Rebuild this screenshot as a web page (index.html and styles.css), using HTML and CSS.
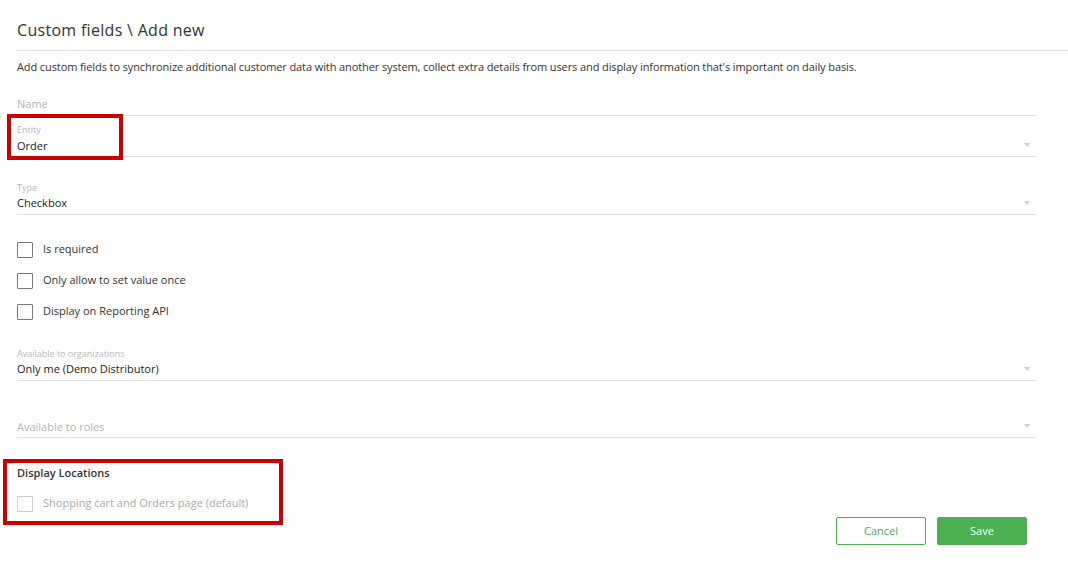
FILE: index.html
```
<!DOCTYPE html>
<html>
<head>
<meta charset="utf-8">
<link rel="stylesheet" href="styles.css">
</head>
<body>
<div class="page">
  <h1 class="title">Custom fields \ Add new</h1>
  <p class="desc">Add custom fields to synchronize additional customer data with another system, collect extra details from users and display information that's important on daily basis.</p>
  <form class="form">
    <div class="field field-name">
      <div class="placeholder">Name</div>
    </div>
    <div class="field field-entity select">
      <div class="label">Entity</div>
      <div class="value">Order</div>
      <span class="arrow"></span>
    </div>
    <div class="field field-type select">
      <div class="label">Type</div>
      <div class="value">Checkbox</div>
      <span class="arrow"></span>
    </div>
    <div class="checks">
      <label class="check"><span class="box"></span><span class="check-text">Is required</span></label>
      <label class="check"><span class="box"></span><span class="check-text">Only allow to set value once</span></label>
      <label class="check"><span class="box"></span><span class="check-text">Display on Reporting API</span></label>
    </div>
    <div class="field field-org select">
      <div class="label">Available to organizations</div>
      <div class="value">Only me (Demo Distributor)</div>
      <span class="arrow"></span>
    </div>
    <div class="field field-roles select">
      <div class="placeholder">Available to roles</div>
      <span class="arrow"></span>
    </div>
    <div class="locations">
      <div class="section-title">Display Locations</div>
      <label class="check disabled"><span class="box"></span><span class="check-text">Shopping cart and Orders page (default)</span></label>
    </div>
    <div class="actions">
      <button type="button" class="btn btn-cancel">Cancel</button>
      <button type="button" class="btn btn-save">Save</button>
    </div>
  </form>
  <div class="mark mark-entity"></div>
  <div class="mark mark-locations"></div>
</div>
</body>
</html>
```
FILE: styles.css
```
html, body {
  margin: 0;
  padding: 0;
  background: #fff;
}
body {
  font-family: "Open Sans", "Noto Sans", sans-serif;
  color: #333;
  font-size: 11px;
}
.page {
  position: relative;
  padding: 20px 0 0 17px;
  width: 1051px;
  height: 543px;
}
.title {
  margin: 0;
  padding-bottom: 10px;
  font-size: 16px;
  line-height: 20px;
  font-weight: normal;
  letter-spacing: 0.3px;
  color: #333;
  border-bottom: 1px solid #e2e2e2;
}
.desc {
  margin: 8px 0 0;
  line-height: 16px;
  font-size: 11px;
  letter-spacing: -0.1px;
  color: #333;
}
.form {
  width: 1020px;
}
.field {
  position: relative;
  border-bottom: 1px solid #e2e2e2;
}
.placeholder {
  font-size: 11px;
  line-height: 16px;
  color: #b4b4b4;
}
.label {
  font-size: 9px;
  line-height: 12px;
  color: #b8b8b8;
}
.value {
  margin-top: 2px;
  font-size: 11px;
  line-height: 16px;
  color: #222;
}
.arrow {
  position: absolute;
  right: 7px;
  bottom: 9px;
  width: 0;
  height: 0;
  border-left: 3.5px solid transparent;
  border-right: 3.5px solid transparent;
  border-top: 4px solid #cfcfcf;
}
.field-name {
  margin-top: 21px;
  padding-bottom: 3px;
}
.field-entity {
  margin-top: 8px;
  padding-bottom: 2px;
}
.field-type {
  margin-top: 25px;
  padding-bottom: 3px;
}
.field-type .value {
  margin-top: 1px;
}
.checks {
  margin-top: 27px;
  display: flex;
  flex-direction: column;
  gap: 15px;
}
.check {
  display: flex;
  align-items: center;
  height: 16px;
  gap: 10px;
  font-size: 11px;
  color: #333;
}
.check-text {
  line-height: 16px;
  margin-bottom: 3px;
}
.box {
  box-sizing: border-box;
  width: 16px;
  height: 16px;
  border: 1px solid #7a7a7a;
  border-radius: 1px;
  flex: none;
}
.field-org {
  margin-top: 28px;
  padding-bottom: 3px;
}
.field-org .value {
  margin-top: 1px;
}
.field-roles {
  margin-top: 38px;
  padding-bottom: 2px;
}
.locations {
  margin-top: 27px;
}
.section-title {
  font-weight: 600;
  font-size: 11px;
  line-height: 16px;
  color: #333;
}
.locations .check {
  margin-top: 15px;
}
.check.disabled {
  color: #aaa;
}
.check.disabled .box {
  border-color: #cfcfcf;
}
.actions {
  display: flex;
  justify-content: flex-end;
  gap: 11px;
  margin-top: 5px;
  padding-right: 10px;
}
.btn {
  box-sizing: border-box;
  width: 90px;
  height: 28px;
  padding: 0 0 2px;
  border-radius: 2px;
  font-family: "Open Sans", "Noto Sans", sans-serif;
  font-size: 11px;
  cursor: pointer;
}
.btn-cancel {
  background: #fff;
  border: 1px solid #4caf50;
  color: #4caf50;
}
.btn-save {
  background: #4caf50;
  border: 1px solid #4caf50;
  color: #fff;
}
.mark {
  position: absolute;
  box-sizing: border-box;
  border: 4px solid #cc0000;
}
.mark-entity {
  left: 7px;
  top: 114px;
  width: 116px;
  height: 46px;
}
.mark-locations {
  left: 3px;
  top: 459px;
  width: 280px;
  height: 66px;
}
```
